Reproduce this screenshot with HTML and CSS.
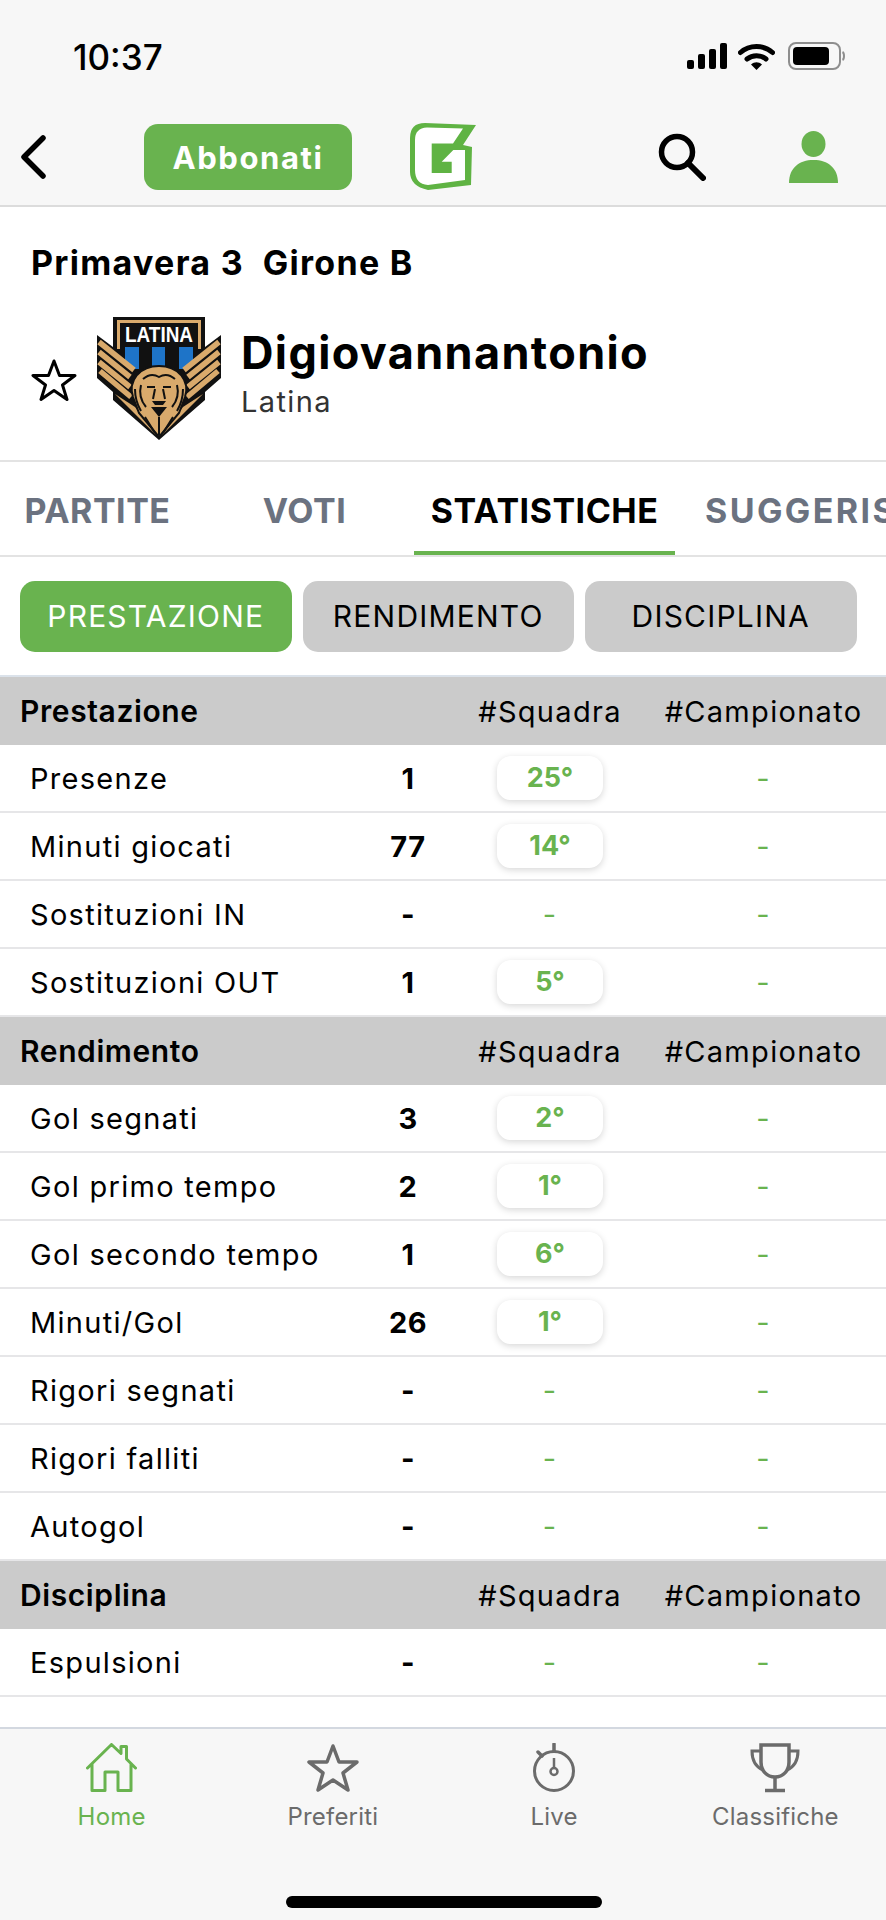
FILE: index.html
```html
<!DOCTYPE html>
<html>
<head>
<meta charset="utf-8">
<title>Digiovannantonio - Statistiche</title>
<link rel="stylesheet" href="styles.css">
</head>
<body>
<div class="app">
    <div class="top">
        <div class="status">
            <div class="time">10:37</div>
            <div class="status_icons">
                <svg class="ic_signal" width="40" height="26" viewBox="0 0 40 26"><rect x="0" y="17" width="7" height="9" rx="2"/><rect x="11" y="11" width="7" height="15" rx="2"/><rect x="22" y="6" width="7" height="20" rx="2"/><rect x="33" y="0" width="7" height="26" rx="2"/></svg>
                <svg class="ic_wifi" width="37" height="27" viewBox="0 0 37 27"><path d="M2.500 9.500C11.500 1.500 25.500 1.500 34.500 9.500" fill="none" stroke="#000" stroke-width="5" stroke-linecap="round"/><path d="M9 16C14.500 11.500 22.500 11.500 28 16" fill="none" stroke="#000" stroke-width="5" stroke-linecap="round"/><path d="M13 21.500C16.500 18.500 20.500 18.500 24 21.500L18.500 27Z"/></svg>
                <svg class="ic_batt" width="57" height="28" viewBox="0 0 57 28"><rect x="1" y="1" width="51" height="26" rx="7" fill="none" stroke="#8e8e8e" stroke-width="2"/><rect x="5" y="5" width="36" height="18" rx="4"/><path d="M54.500 10C56.500 11 56.500 17 54.500 18" fill="none" stroke="#8e8e8e" stroke-width="2"/></svg>
            </div>
        </div>
        <div class="nav">
            <svg class="ic_back" width="26" height="44" viewBox="0 0 26 44"><path d="M23 3L4 22L23 41" fill="none" stroke="#000" stroke-width="5.500" stroke-linecap="round" stroke-linejoin="round"/></svg>
            <button class="subscribe">Abbonati</button>
            <svg class="logo" width="66" height="70" viewBox="0 0 66 70"><path d="M15 1L66 3L53 23L62 25L61 63L18 68Q0 64 0 50V16Q0 1 15 1Z" fill="#5fb343"/><path d="M17 5.500L53 6.500L43 21.500H21.700V51H41.700V39.700H31.700L43.300 28H55V58L18 63Q5 62 5 48V18Q5 6 17 5.500Z" fill="#fff"/></svg>
            <svg class="ic_search" width="48" height="48" viewBox="0 0 48 48"><circle cx="19" cy="19" r="15.500" fill="none" stroke="#000" stroke-width="5.500"/><path d="M30 30L45 45" stroke="#000" stroke-width="6" stroke-linecap="round"/></svg>
            <svg class="ic_user" width="49" height="52" viewBox="0 0 49 52"><ellipse cx="24.500" cy="13" rx="12" ry="13" fill="#69b34f"/><path d="M0 52C0 37 10 29 24.500 29C39 29 49 37 49 52Z" fill="#69b34f"/></svg>
        </div>
    </div>

    <div class="player">
        <div class="league">Primavera 3&nbsp; Girone B</div>
        <div class="player_row">
            <svg class="fav" width="46" height="44" viewBox="0 0 46 44"><path d="M23 3L28.500 17.500H44L31.500 27L36 41.500L23 32.500L10 41.500L14.500 27L2 17.500H17.500Z" fill="none" stroke="#000" stroke-width="3" stroke-linejoin="round"/></svg>
            <svg class="crest" width="124" height="124" viewBox="0 0 124 124">
                <path d="M16 0H108V30L124 18V61L108 75V83L62 123L16 83V75L0 61V18L16 30Z" fill="#111"/>
                <path d="M20 3H104V32H101V6H23V32H20Z" fill="#d9aa6c"/>
                <text x="28" y="25" class="crest_text" textLength="68" lengthAdjust="spacingAndGlyphs">LATINA</text>
                <path d="M28 30H42V52H32L28 46Z" fill="#1e74c8"/>
                <rect x="55" y="30" width="13" height="20" fill="#1e74c8"/>
                <path d="M82 30H96V46L92 52H82Z" fill="#1e74c8"/>
                <g stroke="#d9aa6c" stroke-width="5.500" fill="none">
                    <path d="M2 25L37 53M2 35L33 60M2 45L33 70M3 54L34 80"/>
                    <path d="M122 25L87 53M122 35L91 60M122 45L91 70M121 54L90 80"/>
                </g>
                <path d="M18 77L38 90L59 118Z" fill="#d9aa6c"/>
                <path d="M106 77L86 90L65 118Z" fill="#d9aa6c"/>
                <path d="M40 58Q48 49 62 49Q76 49 84 58Q92 68 88 80L82 96L62 120L42 96L36 80Q32 68 40 58Z" fill="#d9aa6c" stroke="#111" stroke-width="2"/>
                <g stroke="#111" stroke-width="2" fill="none">
                    <path d="M46 62Q54 55 62 60Q70 55 78 62"/>
                    <path d="M44 68C42 76 44 84 49 90M80 68C82 76 80 84 75 90"/>
                    <path d="M38 72Q38 84 44 94M86 72Q86 84 80 94"/>
                    <path d="M50 70H58M66 70H74M58 72L56 82M66 72L68 82"/>
                    <path d="M48 100L58 116M76 100L66 116M62 100V118"/>
                </g>
                <path d="M55 84H69L66 88H58Z" fill="#111"/>
                <path d="M54 90H70L62 100Z" fill="#111"/>
            </svg>
            <div class="player_names">
                <div class="player_name">Digiovannantonio</div>
                <div class="player_team">Latina</div>
            </div>
        </div>
    </div>

    <div class="tabs">
        <div class="tab tab_a">PARTITE</div>
        <div class="tab tab_b">VOTI</div>
        <div class="tab tab_c active">STATISTICHE</div>
        <div class="tab tab_d">SUGGERISCI</div>
    </div>

    <div class="pills">
        <div class="pill on">PRESTAZIONE</div>
        <div class="pill">RENDIMENTO</div>
        <div class="pill">DISCIPLINA</div>
    </div>

    <div class="stats">
        <div class="row head"><div class="head_name">Prestazione</div><div></div><div class="cell">#Squadra</div><div class="cell">#Campionato</div></div>
        <div class="row"><div class="label">Presenze</div><div class="val">1</div><div class="cell"><span class="badge">25°</span></div><div class="cell dash">-</div></div>
        <div class="row"><div class="label">Minuti giocati</div><div class="val">77</div><div class="cell"><span class="badge">14°</span></div><div class="cell dash">-</div></div>
        <div class="row"><div class="label">Sostituzioni IN</div><div class="val">-</div><div class="cell dash">-</div><div class="cell dash">-</div></div>
        <div class="row"><div class="label">Sostituzioni OUT</div><div class="val">1</div><div class="cell"><span class="badge">5°</span></div><div class="cell dash">-</div></div>

        <div class="row head"><div class="head_name">Rendimento</div><div></div><div class="cell">#Squadra</div><div class="cell">#Campionato</div></div>
        <div class="row"><div class="label">Gol segnati</div><div class="val">3</div><div class="cell"><span class="badge">2°</span></div><div class="cell dash">-</div></div>
        <div class="row"><div class="label">Gol primo tempo</div><div class="val">2</div><div class="cell"><span class="badge">1°</span></div><div class="cell dash">-</div></div>
        <div class="row"><div class="label">Gol secondo tempo</div><div class="val">1</div><div class="cell"><span class="badge">6°</span></div><div class="cell dash">-</div></div>
        <div class="row"><div class="label">Minuti/Gol</div><div class="val">26</div><div class="cell"><span class="badge">1°</span></div><div class="cell dash">-</div></div>
        <div class="row"><div class="label">Rigori segnati</div><div class="val">-</div><div class="cell dash">-</div><div class="cell dash">-</div></div>
        <div class="row"><div class="label">Rigori falliti</div><div class="val">-</div><div class="cell dash">-</div><div class="cell dash">-</div></div>
        <div class="row"><div class="label">Autogol</div><div class="val">-</div><div class="cell dash">-</div><div class="cell dash">-</div></div>

        <div class="row head"><div class="head_name">Disciplina</div><div></div><div class="cell">#Squadra</div><div class="cell">#Campionato</div></div>
        <div class="row"><div class="label">Espulsioni</div><div class="val">-</div><div class="cell dash">-</div><div class="cell dash">-</div></div>
    </div>

    <div class="footer">
        <div class="foot_items">
            <div class="foot_item current">
                <svg width="51" height="50" viewBox="0 0 51 50"><path d="M1.500 25L25.500 1.500L35 10.500V3.500H40.500V16L49.500 25M6 21V47.500H19V29H32V47.500H45V21" fill="none" stroke="#69b34f" stroke-width="3" stroke-linejoin="round" stroke-linecap="round"/></svg>
                <div class="foot_label">Home</div>
            </div>
            <div class="foot_item">
                <svg width="52" height="50" viewBox="0 0 52 50"><path d="M26 3L32 19H50L36 30L41 47L26 37L11 47L16 30L2 19H20Z" fill="none" stroke="#6b6b6b" stroke-width="3.500" stroke-linejoin="round"/></svg>
                <div class="foot_label">Preferiti</div>
            </div>
            <div class="foot_item">
                <svg width="42" height="50" viewBox="0 0 42 50"><circle cx="21" cy="28" r="19.500" fill="none" stroke="#6b6b6b" stroke-width="3"/><path d="M21 1V8M5 9L9 13" stroke="#6b6b6b" stroke-width="3.500" stroke-linecap="round"/><path d="M21 15V25" stroke="#6b6b6b" stroke-width="2.500"/><circle cx="21" cy="28.500" r="3.500" fill="none" stroke="#6b6b6b" stroke-width="2.500"/></svg>
                <div class="foot_label">Live</div>
            </div>
            <div class="foot_item">
                <svg width="50" height="50" viewBox="0 0 50 50"><path d="M11 2H39V19C39 28 33 34 25 34C17 34 11 28 11 19Z" fill="none" stroke="#6b6b6b" stroke-width="3.500"/><path d="M11 8H2C2 18 6 24 13 27M39 8H48C48 18 44 24 37 27" fill="none" stroke="#6b6b6b" stroke-width="3"/><path d="M25 34V47M15 47.500H35" stroke="#6b6b6b" stroke-width="3.500"/></svg>
                <div class="foot_label">Classifiche</div>
            </div>
        </div>
        <div class="home_bar"></div>
    </div>
</div>
</body>
</html>
```

FILE: styles.css
```css
* {
    box-sizing: border-box;
}
body {
    margin: 0;
    background-color: #fff;
    font-family: Inter, "Liberation Sans", sans-serif;
    color: #000;
}
.app {
    width: 886px;
    height: 1920px;
    display: flex;
    flex-direction: column;
    overflow: hidden;
}

/* status bar + nav */
.top {
    height: 207px;
    background-color: #f7f7f7;
    border-bottom: 2px solid #dcdcdc;
}
.status {
    height: 119px;
    padding: 40px 41px 0 73px;
    display: flex;
    justify-content: space-between;
    align-items: flex-start;
}
.time {
    font-size: 35px;
    line-height: 34px;
    font-weight: 500;
}
.status_icons {
    display: flex;
    align-items: center;
    gap: 13px;
    margin-top: 2px;
}
.ic_signal {
    margin-right: -2px;
}
.nav {
    display: flex;
    align-items: center;
    padding-left: 20px;
    height: 76px;
}
.ic_back {
    margin-right: 98px;
}
.subscribe {
    width: 208px;
    height: 66px;
    border: none;
    border-radius: 14px;
    background-color: #69b34f;
    color: #fff;
    font-family: inherit;
    font-size: 31px;
    font-weight: 700;
    letter-spacing: 1.6px;
}
.logo {
    margin-left: 58px;
}
.ic_search {
    margin-left: 182px;
}
.ic_user {
    margin-left: 83px;
}

/* player */
.player {
    height: 255px;
    border-bottom: 2px solid #e3e3e3;
    padding: 36px 0 0 31px;
}
.league {
    font-size: 34px;
    line-height: 40px;
    font-weight: 700;
    letter-spacing: 1.3px;
}
.player_row {
    display: flex;
    align-items: flex-start;
    margin-top: 34px;
}
.fav {
    margin: 41px 20px 0 0;
}
.player_names {
    margin-left: 20px;
}
.player_name {
    font-size: 45px;
    line-height: 50px;
    font-weight: 700;
    margin-top: 11px;
    letter-spacing: 1.35px;
}
.player_team {
    font-size: 29px;
    line-height: 34px;
    color: #333;
    margin-top: 7px;
    letter-spacing: 1.4px;
}
.crest_text {
    font-family: "Liberation Sans", sans-serif;
    font-size: 22px;
    font-weight: 700;
    fill: #fff;
}

/* tabs */
.tabs {
    height: 95px;
    display: flex;
    border-bottom: 2px solid #e3e3e3;
    overflow: hidden;
    flex: none;
}
.tab {
    flex: none;
    height: 95px;
    text-align: center;
    line-height: 97px;
    font-size: 34px;
    font-weight: 700;
    letter-spacing: 0.5px;
    color: #6b7280;
}
.tab_a {
    width: 195px;
}
.tab_b {
    width: 219px;
}
.tab_c {
    width: 261px;
}
.tab_d {
    padding-left: 30px;
    text-align: left;
    white-space: nowrap;
    letter-spacing: 2.4px;
}
.tab.active {
    color: #000;
    height: 93px;
    border-bottom: 4px solid #69b34f;
}

/* pills */
.pills {
    height: 120px;
    padding: 24px 0 0 20px;
    display: flex;
    gap: 11px;
    flex: none;
}
.pill {
    width: 271.5px;
    height: 71px;
    border-radius: 15px;
    background-color: #cbcbcb;
    text-align: center;
    line-height: 71px;
    font-size: 30px;
    letter-spacing: 1.2px;
}
.pill.on {
    background-color: #69b34f;
    color: #fff;
}

/* table */
.stats {
    flex: 1;
    border-top: 2px solid #dbe2ea;
    overflow: hidden;
    margin-top: -2px;
}
.row {
    height: 68px;
    display: grid;
    grid-template-columns: 353px 110px 174px 253px;
    align-items: center;
    border-bottom: 2px solid #e6e6e8;
    font-size: 29px;
    letter-spacing: 1.3px;
}
.row.head {
    background-color: #cbcbcb;
    border-bottom: none;
}
.head_name {
    padding-left: 20px;
    font-weight: 600;
    font-size: 30px;
    letter-spacing: 0.6px;
}
.label {
    padding-left: 30px;
}
.val {
    text-align: center;
    font-weight: 700;
    letter-spacing: 0.5px;
}
.cell {
    text-align: center;
}
.dash {
    color: #69b34f;
}
.badge {
    display: inline-block;
    width: 106px;
    height: 44px;
    line-height: 44px;
    border-radius: 14px;
    background-color: #fff;
    box-shadow: 0 2px 7px rgba(0, 0, 0, 0.16);
    color: #69b34f;
    font-size: 27px;
    font-weight: 700;
    letter-spacing: 0;
}

/* bottom bar */
.footer {
    height: 193px;
    flex: none;
    background-color: #f7f7f7;
    border-top: 2px solid #d3d8e0;
    position: relative;
}
.foot_items {
    display: flex;
    padding: 14px 0 0 1px;
}
.foot_item {
    width: 222px;
    display: flex;
    flex-direction: column;
    align-items: center;
    color: #6b6b6b;
}
.foot_item.current {
    color: #69b34f;
}
.foot_label {
    font-size: 24px;
    line-height: 30px;
    margin-top: 9px;
    letter-spacing: 0.2px;
}
.home_bar {
    width: 316px;
    height: 12px;
    border-radius: 6px;
    background-color: #000;
    margin: 64px 0 0 286px;
}
```
